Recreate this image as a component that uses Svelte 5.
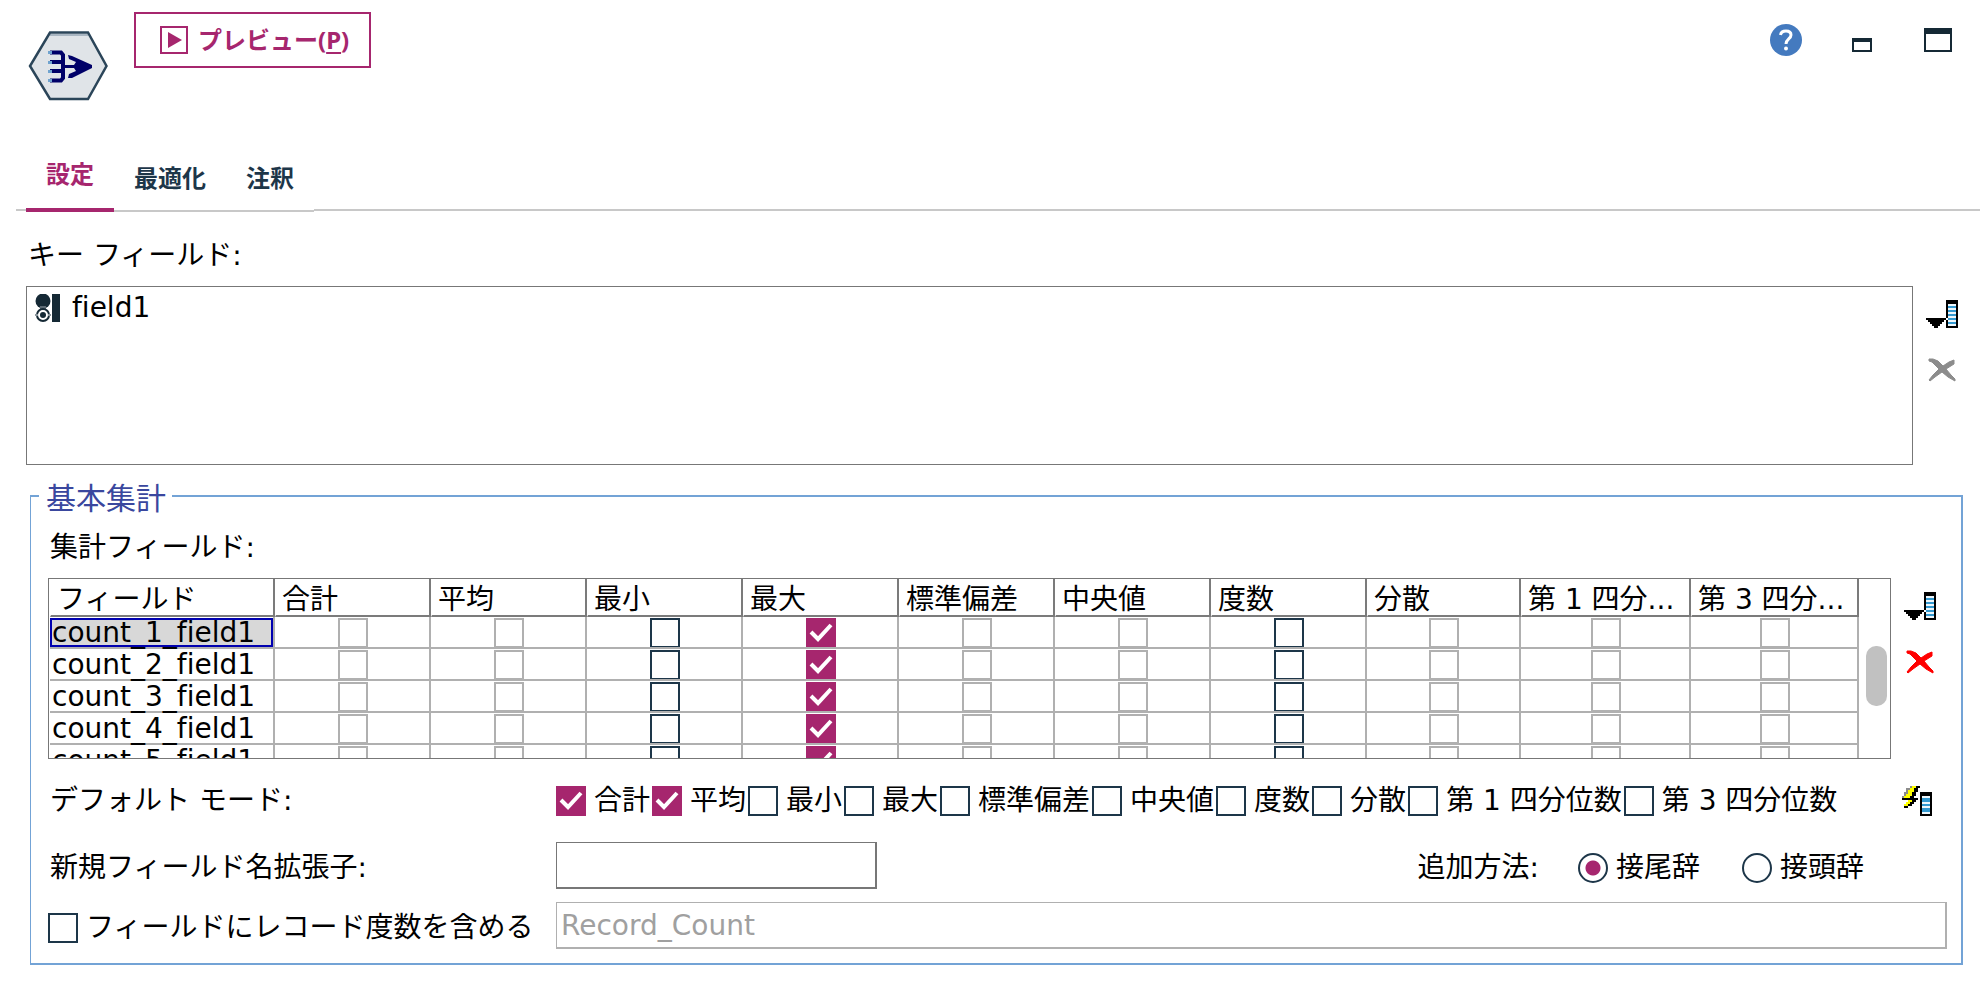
<script>
  const columns = [
    { label: 'フィールド', width: 225 },
    { label: '合計', width: 156 },
    { label: '平均', width: 156 },
    { label: '最小', width: 156, enabled: true },
    { label: '最大', width: 156, enabled: true, checked: true },
    { label: '標準偏差', width: 156 },
    { label: '中央値', width: 156 },
    { label: '度数', width: 156, enabled: true },
    { label: '分散', width: 154 },
    { label: '第 1 四分...', width: 170 },
    { label: '第 3 四分...', width: 168 }
  ];
  const measures = columns.slice(1);
  const rows = [1, 2, 3, 4, 5].map((n) => `count_${n}_field1`);

  const modes = [
    { label: '合計', checked: true },
    { label: '平均', checked: true },
    { label: '最小' },
    { label: '最大' },
    { label: '標準偏差' },
    { label: '中央値' },
    { label: '度数' },
    { label: '分散' },
    { label: '第 1 四分位数' },
    { label: '第 3 四分位数' }
  ];
</script>

{#snippet columnPicker()}
  <svg width="32" height="28" viewBox="0 0 32 28" shape-rendering="crispEdges" aria-hidden="true">
    <path d="M0 18h20v2h-2v2h-2v2h-2v2h-2v2H8v-2H6v-2H4v-2H2v-2H0z" fill="#000" />
    <path d="M20 0h12v28H20z" fill="#000" />
    <path d="M22 4h8v22h-8z" fill="#eef7fc" />
    <path d="M22 6h8v2h-8zM22 10h8v2h-8zM22 14h8v2h-8zM22 18h8v2h-8zM22 22h8v2h-8z" fill="#3399d0" />
    <path d="M20 18h2v2h-2z" fill="#fff" />
  </svg>
{/snippet}

{#snippet cross(color)}
  <svg width="28" height="24" viewBox="0 0 28 24" aria-hidden="true">
    <path
      d="M1 1L5 1L10 3L15 8L21 4L26 2L26 6L18 11L23 17L27 21L27 23L20 19L14 14L7 19L2 23L1 22L5 17L11 11L6 6L4 4L1 3z"
      fill={color}
      stroke={color}
      stroke-width="1"
    />
  </svg>
{/snippet}

<div class="dialog">
  <header class="top">
    <svg class="node" width="80" height="72" viewBox="0 0 80 72" aria-hidden="true">
      <path d="M22 2H60L79 36L60 70H22L2 36z" fill="#e0e4e8" />
      <path d="M22 5H60" stroke="#a9b6c2" stroke-width="2" />
      <path d="M22 2.500H60L78.500 36L60 69H22L2 36z" fill="none" stroke="#2b4559" stroke-width="2.500" />
      <path d="M22 22.500H33L35 25V48L33 50.500H22M22 32H35M22 41H35" fill="none" stroke="#000068" stroke-width="4" />
      <path d="M20 21h4v3h-4zM20 31h4v3h-4zM20 40h4v3h-4zM20 49h4v3h-4z" fill="#6fa3cf" />
      <path d="M40 25L44 26L64 35V38L44 48L40 48L41 44L48 41L46 38H36V35H46L48 32L41 29z" fill="#000068" />
    </svg>
    <button class="preview">
      <svg width="28" height="28" viewBox="0 0 28 28" aria-hidden="true">
        <rect x="1" y="1" width="26" height="26" fill="none" stroke="#a6266e" stroke-width="2" />
        <path d="M8 6V22L22 14z" fill="#a6266e" />
      </svg>
      <span>プレビュー(<u>P</u>)</span>
    </button>
    <div class="window-tools">
      <button class="icon" aria-label="ヘルプ">
        <svg width="32" height="32" viewBox="0 0 32 32" aria-hidden="true">
          <circle cx="16" cy="16" r="16" fill="#447abf" />
          <path d="M10.500 11C11 7.500 13.500 7 16 7C19 7 21 8.500 21 11C21 15 16 15 16 20" fill="none" stroke="#fff" stroke-width="3" />
          <circle cx="16" cy="24.500" r="2" fill="#fff" />
        </svg>
      </button>
      <button class="icon" aria-label="最小化">
        <svg width="22" height="24" viewBox="0 0 22 24" shape-rendering="crispEdges" aria-hidden="true">
          <path d="M0 10H20V24H0zM2 14V22H18V14z" fill="#152935" fill-rule="evenodd" />
        </svg>
      </button>
      <button class="icon" aria-label="最大化">
        <svg width="28" height="24" viewBox="0 0 28 24" shape-rendering="crispEdges" aria-hidden="true">
          <path d="M0 0H28V24H0zM2 6V22H26V6z" fill="#152935" fill-rule="evenodd" />
        </svg>
      </button>
    </div>
  </header>

  <div class="tabs" role="tablist">
    <button role="tab" class="selected" aria-selected="true">設定</button>
    <button role="tab" aria-selected="false">最適化</button>
    <button role="tab" aria-selected="false">注釈</button>
    <span class="rule"></span>
  </div>

  <main>
    <div class="caption" id="key-label">キー フィールド:</div>
    <div class="keys">
      <ul class="key-list" aria-labelledby="key-label">
        <li>
          <svg width="25" height="28" viewBox="0 0 25 28" aria-hidden="true">
            <circle cx="8" cy="7" r="7.500" fill="#152935" />
            <path d="M5 12H11V17H5z" fill="#5d6b75" />
            <circle cx="8" cy="21" r="6" fill="#fff" stroke="#152935" stroke-width="2" />
            <circle cx="8" cy="21" r="3" fill="#152935" />
            <path d="M0 20h3v2H0zM13 20h3v2h-3z" fill="#8b969d" />
            <path d="M17 0H25V28H17z" fill="#152935" />
          </svg>
          <span>field1</span>
        </li>
      </ul>
      <div class="side">
        <button class="icon" aria-label="フィールドを選択">{@render columnPicker()}</button>
        <button class="icon" aria-label="削除" disabled>{@render cross('#8c8c8c')}</button>
      </div>
    </div>

    <fieldset>
      <legend>基本集計</legend>
      <div class="caption">集計フィールド:</div>

      <div class="aggregates">
        <div class="grid">
          <div class="scroller">
            <table>
              <colgroup>
                {#each columns as column}
                  <col style="width: {column.width}px" />
                {/each}
              </colgroup>
              <thead>
                <tr>
                  {#each columns as column}
                    <th scope="col">{column.label}</th>
                  {/each}
                </tr>
              </thead>
              <tbody>
                {#each rows as name, r}
                  <tr>
                    <td class="name" class:current={r === 0}><span>{name}</span></td>
                    {#each measures as measure}
                      <td>
                        <input
                          type="checkbox"
                          aria-label="{name} {measure.label}"
                          checked={measure.checked}
                          disabled={!measure.enabled}
                        />
                      </td>
                    {/each}
                  </tr>
                {/each}
              </tbody>
            </table>
          </div>
          <div class="scrollbar"><span></span></div>
        </div>
        <div class="side">
          <button class="icon" aria-label="集計フィールドを選択">{@render columnPicker()}</button>
          <button class="icon" aria-label="集計フィールドを削除">{@render cross('#ff0000')}</button>
        </div>
      </div>

      <div class="row modes">
        <span class="row-label">デフォルト モード:</span>
        <div class="mode-list">
          {#each modes as mode}
            <label><input type="checkbox" checked={mode.checked} />{mode.label}</label>
          {/each}
        </div>
        <button class="icon apply" aria-label="デフォルトを適用">
          <svg width="30" height="30" viewBox="0 0 30 30" shape-rendering="crispEdges" aria-hidden="true">
            <path d="M10 0h4v2h-2v4h-2v4H8v2h6v2h-2v2h-2v2H6v2H4v2H2v-4h2v-2h2v-2H2v-4h2V8h2V4h2V2h2z" fill="#ffff00" />
            <path d="M8 0h2v2H8v2H6v4H4v2H2v2H0v-2h2V6h2V2h4z" fill="#8c8c8c" />
            <path d="M14 0h4v2h-2v4h-2v4h-2v2h4v2h-2v2h-2v2h-2v2H6v2H2v-2h4v-2h2v-2h2v-2H0v-2h8v-2h2V6h2V2h2z" fill="#000" />
            <path d="M18 6h12v24H18z" fill="#000" />
            <path d="M20 10h8v18h-8z" fill="#eef7fc" />
            <path d="M20 12h8v4h-8zM20 18h8v2h-8zM20 22h8v4h-8z" fill="#3399d0" />
          </svg>
        </button>
      </div>

      <div class="row extension">
        <label class="row-label" for="extension">新規フィールド名拡張子:</label>
        <input id="extension" class="text short" type="text" />
        <div class="placement" role="radiogroup" aria-labelledby="placement-label">
          <span id="placement-label">追加方法:</span>
          <label><input type="radio" name="placement" checked />接尾辞</label>
          <label><input type="radio" name="placement" />接頭辞</label>
        </div>
      </div>

      <div class="row count">
        <label class="row-label"><input type="checkbox" />フィールドにレコード度数を含める</label>
        <input class="text" type="text" aria-label="レコード度数フィールド名" value="Record_Count" disabled />
      </div>
    </fieldset>
  </main>
</div>

<style>
  :global(body) {
    background: #fff;
  }

  .dialog,
  .dialog * {
    box-sizing: border-box;
  }

  .dialog {
    color: #000;
    font: 28px/32px 'DejaVu Sans', 'Noto Sans CJK JP', sans-serif;
    font-variant-ligatures: none;
    white-space: nowrap;
  }

  svg {
    display: block;
    flex: none;
  }

  button,
  input {
    margin: 0;
    font: inherit;
  }

  .icon {
    display: block;
    padding: 0;
    border: 0;
    background: none;
  }

  .top {
    display: flex;
    align-items: flex-start;
    gap: 26px;
    min-height: 161px;
    padding: 12px 30px 0 28px;
  }

  .node {
    margin-top: 18px;
  }

  .preview {
    display: flex;
    align-items: center;
    gap: 10px;
    height: 56px;
    padding: 0 20px 0 24px;
    border: 2px solid #a6266e;
    background: #fff;
    color: #a6266e;
    font: bold 24px/32px 'Noto Sans', 'Noto Sans CJK JP', sans-serif;
  }

  .preview u {
    text-decoration-thickness: 2px;
    text-underline-offset: 3px;
  }

  .window-tools {
    display: flex;
    align-items: center;
    gap: 50px;
    margin: 12px 0 0 auto;
  }

  .tabs {
    display: flex;
    align-items: flex-end;
    padding: 0 2px 0 16px;
  }

  .tabs::before,
  .rule {
    content: '';
    width: 10px;
    margin-bottom: 1px;
    border-bottom: 2px solid #c8c8c8;
  }

  .rule {
    flex: 1;
  }

  .tabs button {
    padding: 0 20px 21px;
    border: 0;
    border-bottom: 2px solid #c8c8c8;
    background: none;
    color: #1d3649;
    font: bold 24px/24px 'Noto Sans CJK JP', sans-serif;
  }

  .tabs .selected {
    padding-bottom: 23px;
    border-bottom: 4px solid #a6266e;
    color: #a6266e;
  }

  main {
    padding: 28px 19px 0 26px;
  }

  .caption {
    padding: 0 2px 14px;
  }

  .keys {
    display: flex;
    gap: 13px;
    padding-right: 5px;
  }

  .key-list {
    flex: 1;
    height: 179px;
    margin: 0;
    padding: 5px 8px;
    border: 1px solid #777;
    list-style: none;
  }

  .key-list li {
    display: flex;
    align-items: center;
    gap: 12px;
    height: 32px;
  }

  .side {
    display: flex;
    flex-direction: column;
    align-items: center;
    gap: 30px;
    padding-top: 14px;
  }

  fieldset {
    min-width: 0;
    margin: 10px 0 0 4px;
    padding: 0 14px 14px 17px;
    border: solid #73a3d6;
    border-width: 2px 2px 2px 1px;
  }

  legend {
    margin-left: -9px;
    padding: 6px 6px 0 7px;
    color: #3a479e;
    font-size: 30px;
    line-height: 36px;
  }

  fieldset .caption {
    padding-top: 15px;
  }

  .aggregates {
    display: flex;
    gap: 13px;
    padding-right: 11px;
  }

  .grid {
    display: flex;
    flex: 1;
    min-width: 0;
    height: 181px;
    padding-left: 1px;
    border: 1px solid #777;
  }

  .scroller {
    flex: 1;
    min-width: 0;
    overflow: hidden;
  }

  .scrollbar {
    width: 31px;
    padding: 67px 3px 0 7px;
  }

  .scrollbar span {
    display: block;
    height: 60px;
    border-radius: 10px;
    background: #c1c1c1;
  }

  table {
    width: 100%;
    border-spacing: 0;
    table-layout: fixed;
  }

  th {
    height: 38px;
    padding: 6px 0 0 6px;
    border: solid #7b7b7b;
    border-width: 0 2px 2px 0;
    border-left: 1px solid #fff;
    font-weight: normal;
    line-height: 30px;
    text-align: left;
  }

  td {
    height: 32px;
    padding: 1px 0 0 2px;
    border: solid #b0b0b0;
    border-width: 0 2px 2px 0;
  }

  td input[type='checkbox'] {
    display: block;
    height: 29px;
    margin: 0 auto;
    border-bottom-width: 1px;
  }

  .name {
    padding-left: 0;
    text-align: left;
  }

  .name span {
    display: block;
    height: 29px;
    padding-left: 2px;
    line-height: 30px;
  }

  .name.current span {
    padding-left: 0;
    border: 2px solid #0000b0;
    background: #d8d8d8;
    line-height: 26px;
  }

  input[type='checkbox'],
  input[type='radio'] {
    flex: none;
    width: 30px;
    height: 30px;
    border: 2px solid #1d3649;
    appearance: none;
    background: #fff;
  }

  td input[type='checkbox'] {
    height: 29px;
    border-bottom-width: 1px;
  }

  input[type='checkbox']:disabled {
    border-color: #b0b0b0;
  }

  input[type='checkbox']:checked {
    border-color: #a6266e;
    background: #a6266e
      url("data:image/svg+xml,%3Csvg xmlns='http://www.w3.org/2000/svg' viewBox='0 0 26 26'%3E%3Cpath d='M3 12L10 19L23 5' fill='none' stroke='white' stroke-width='4'/%3E%3C/svg%3E")
      center / 26px 26px no-repeat;
  }

  input[type='radio'] {
    border-radius: 50%;
  }

  input[type='radio']:checked {
    background: radial-gradient(circle, #a6266e 7px, #fff 8px);
  }

  .row {
    display: flex;
    align-items: center;
  }

  .row label {
    display: flex;
    align-items: center;
    gap: 8px;
  }

  .row-label {
    flex: none;
    width: 506px;
  }

  .modes {
    padding: 26px 15px 0 2px;
  }

  .mode-list {
    display: flex;
    gap: 2px;
  }

  .apply {
    margin-left: auto;
  }

  .extension {
    padding: 25px 83px 0 2px;
  }

  .extension .row-label,
  .count .row-label,
  .placement {
    padding-top: 4px;
  }

  .text {
    flex: 1;
    min-width: 0;
    height: 47px;
    padding: 0 4px;
    border: solid #777;
    border-width: 1px 2px 2px 1px;
    border-radius: 0;
    background: #fff;
  }

  .text.short {
    flex: 0 0 321px;
  }

  .text:disabled {
    border-color: #b0b0b0;
    color: #a0a0a0;
  }

  .placement {
    display: flex;
    align-items: center;
    gap: 42px;
    margin-left: auto;
  }

  .placement span {
    margin-right: -3px;
  }

  .count {
    padding-top: 13px;
  }

  .count .row-label {
    width: 508px;
  }
</style>
